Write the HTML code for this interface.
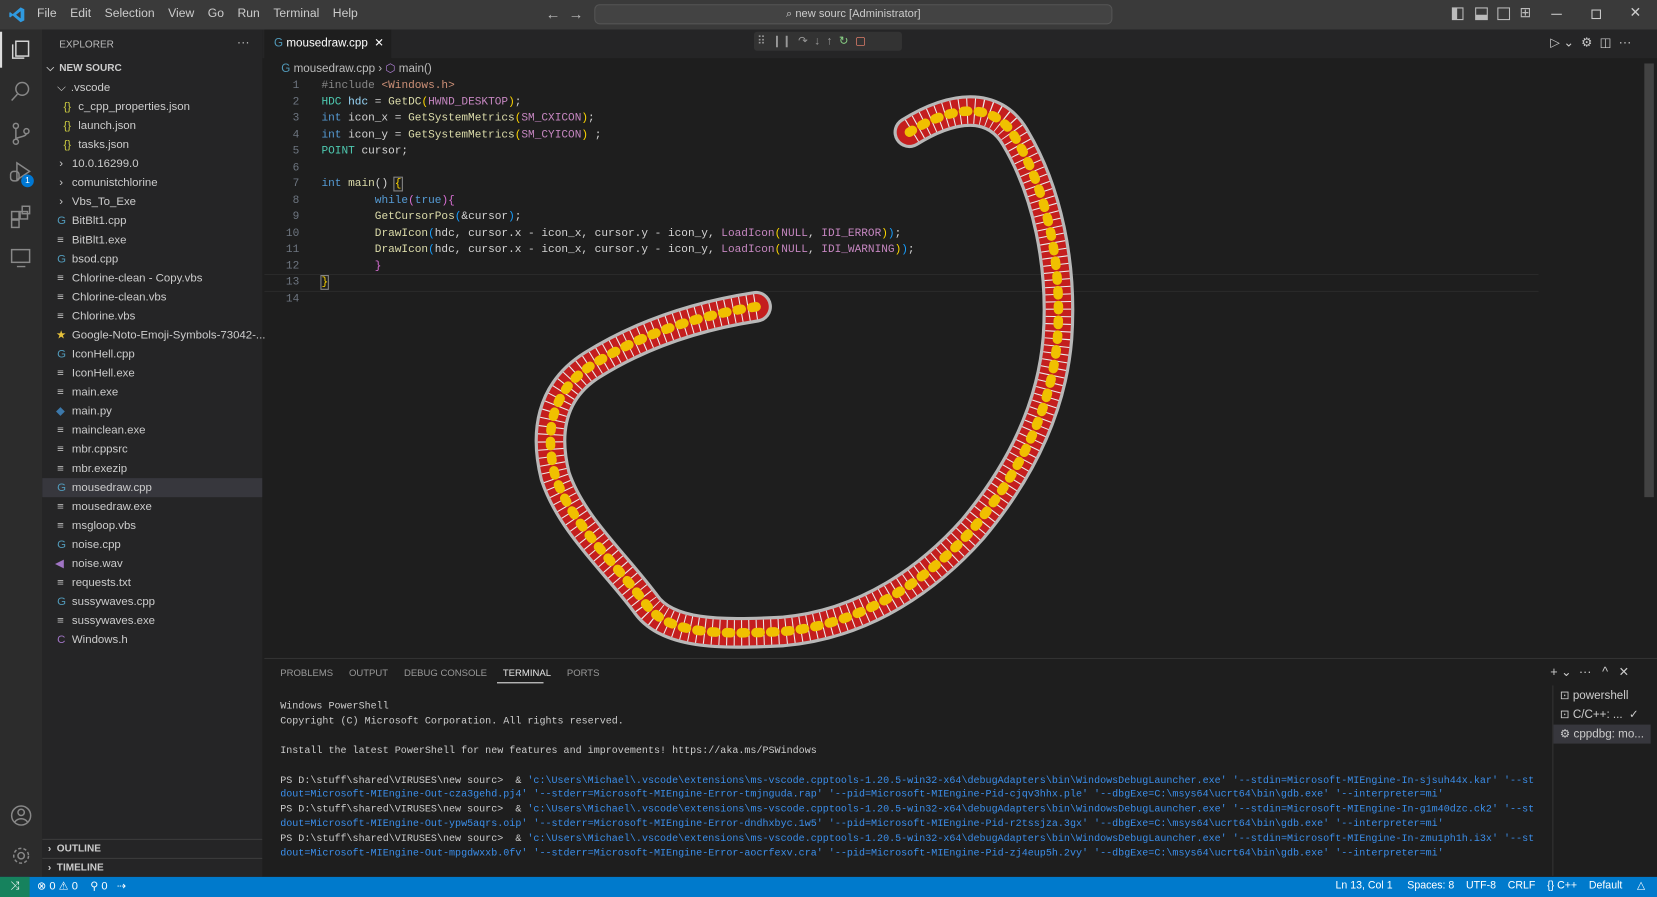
<!DOCTYPE html>
<html><head><meta charset="utf-8"><style>
*{margin:0;padding:0;box-sizing:border-box}
html,body{width:1657px;height:897px;overflow:hidden;background:#1e1e1e}
#w{position:absolute;left:0;top:0;width:1567px;height:848px;transform:scale(1.05744,1.05778);transform-origin:0 0;font-family:"Liberation Sans",sans-serif;color:#ccc;font-size:11px}
.a{position:absolute;white-space:pre}
.mono{font-family:"Liberation Mono",monospace}
#title{left:0;top:0;width:1567px;height:28px;background:#3a3a3a}
#act{left:0;top:28px;width:40px;height:801px;background:#2c2c2c}
#side{left:40px;top:28px;width:208px;height:801px;background:#252526}
#tabs{left:248px;top:28px;width:1319px;height:27px;background:#252526}
.it{position:absolute;left:0;width:208px;height:18px;line-height:18px;font-size:10.8px;color:#ccc}
.it i{position:absolute;font-style:normal}
.it b{position:absolute;font-weight:normal}
.code{font-size:10.5px;line-height:15.5px}
.ln{color:#6e7681;text-align:right;width:35px}
.t{font-size:9.5px;line-height:13.9px;color:#ccc}
.c{color:#3b8eea}
</style></head><body><div id="w">
<div id="title" class="a"></div>
<svg class="a" style="left:8px;top:6px" width="16" height="16" viewBox="0 0 16 16"><path d="M11.5 1 L15 2.7 V13.3 L11.5 15 L4 8.6 L1.6 10.5 L0.8 10 V6 L1.6 5.5 L4 7.4 Z M11.5 4.6 L7.2 8 L11.5 11.4 Z" fill="#2f9ae0"/></svg>
<div class="a" style="left:35px;top:7px;font-size:11.5px;color:#ccc">File&nbsp;&nbsp;&nbsp;&nbsp;Edit&nbsp;&nbsp;&nbsp;&nbsp;Selection&nbsp;&nbsp;&nbsp;&nbsp;View&nbsp;&nbsp;&nbsp;&nbsp;Go&nbsp;&nbsp;&nbsp;&nbsp;Run&nbsp;&nbsp;&nbsp;&nbsp;Terminal&nbsp;&nbsp;&nbsp;&nbsp;Help</div>
<div class="a" style="left:516px;top:5px;color:#bbb;font-size:14px">←&nbsp;&nbsp;→</div>
<div class="a" style="left:562px;top:4px;width:490px;height:19px;border:1px solid #555;border-radius:5px;background:#434343;text-align:center;line-height:17px;font-size:10.5px;color:#ccc">⌕ new sourc [Administrator]</div>
<div class="a" style="left:1373px;top:7px;width:11px;height:12px;border:1px solid #bbb;border-left:5px solid #bbb"></div>
<div class="a" style="left:1395px;top:7px;width:12px;height:12px;border:1px solid #bbb;border-bottom:5px solid #bbb"></div>
<div class="a" style="left:1416px;top:7px;width:12px;height:12px;border:1px solid #bbb"></div>
<div class="a" style="left:1437px;top:4px;color:#bbb;font-size:13px">⊞</div>
<div class="a" style="left:1467px;top:13px;width:10px;height:1px;background:#ccc"></div>
<div class="a" style="left:1505px;top:9px;width:9px;height:9px;border:1px solid #ccc"></div>
<div class="a" style="left:1541px;top:4px;color:#ccc;font-size:13px">✕</div>

<div id="act" class="a"></div>
<div class="a" style="left:0;top:30px;width:2px;height:34px;background:#ddd"></div>
<svg class="a" style="left:9px;top:34px" width="22" height="190" viewBox="0 0 22 190" fill="none" stroke="#d4d4d4" stroke-width="1.4">
<rect x="6" y="5" width="12" height="14"/><path d="M3 8v13h11"/>
<g stroke="#888"><circle cx="12" cy="50" r="6"/><path d="M7.5 55 L2 61"/>
<circle cx="6" cy="85" r="2.4"/><circle cx="6" cy="100" r="2.4"/><circle cx="16" cy="90" r="2.4"/><path d="M6 87v10M16 92c0 4-10 3-10 6"/>
<path d="M7 120 L19 128 L7 136 Z"/><rect x="1" y="128" width="8" height="9" rx="3"/>
<rect x="2" y="166" width="7" height="7"/><rect x="10" y="166" width="7" height="7"/><rect x="2" y="174" width="7" height="7"/><rect x="12" y="161" width="7" height="7"/></g></svg>
<div class="a" style="left:20px;top:165px;width:12px;height:12px;border-radius:6px;background:#0078d4;color:#fff;font-size:8px;text-align:center;line-height:12px">1</div>
<svg class="a" style="left:9px;top:234px" width="22" height="20" fill="none" stroke="#888" stroke-width="1.4"><rect x="2" y="2" width="17" height="12"/><path d="M7 18h8"/></svg>
<svg class="a" style="left:9px;top:760px" width="22" height="60" fill="none" stroke="#888" stroke-width="1.4"><circle cx="11" cy="11" r="9"/><circle cx="11" cy="8" r="3"/><path d="M5 17c3-4 9-4 12 0"/><circle cx="11" cy="49" r="3"/><circle cx="11" cy="49" r="7" stroke-dasharray="3 2"/></svg>

<div id="side" class="a"></div>
<div class="a" style="left:56px;top:37px;font-size:9.5px;color:#bbb">EXPLORER</div>
<div class="a" style="left:224px;top:33px;color:#bbb;font-size:12px">···</div>
<div class="a" style="left:40px;top:56px;width:208px">
<div class="it" style="top:0;font-weight:bold;font-size:9.5px"><i style="left:4px">⌵</i><b style="left:16px;font-weight:bold">NEW SOURC</b></div>
<div class="it" style="top:18px"><i style="left:14px">⌵</i><b style="left:27px">.vscode</b></div>
<div class="it" style="top:36px"><i style="left:20px;color:#cbcb41">{}</i><b style="left:34px">c_cpp_properties.json</b></div>
<div class="it" style="top:54px"><i style="left:20px;color:#cbcb41">{}</i><b style="left:34px">launch.json</b></div>
<div class="it" style="top:72px"><i style="left:20px;color:#cbcb41">{}</i><b style="left:34px">tasks.json</b></div>
<div class="it" style="top:90px"><i style="left:16px">›</i><b style="left:28px">10.0.16299.0</b></div>
<div class="it" style="top:108px"><i style="left:16px">›</i><b style="left:28px">comunistchlorine</b></div>
<div class="it" style="top:126px"><i style="left:16px">›</i><b style="left:28px">Vbs_To_Exe</b></div>
<div class="it" style="top:144px"><i style="left:14px;color:#519aba">G</i><b style="left:28px">BitBlt1.cpp</b></div>
<div class="it" style="top:162px"><i style="left:14px">≡</i><b style="left:28px">BitBlt1.exe</b></div>
<div class="it" style="top:180px"><i style="left:14px;color:#519aba">G</i><b style="left:28px">bsod.cpp</b></div>
<div class="it" style="top:198px"><i style="left:14px">≡</i><b style="left:28px">Chlorine-clean - Copy.vbs</b></div>
<div class="it" style="top:216px"><i style="left:14px">≡</i><b style="left:28px">Chlorine-clean.vbs</b></div>
<div class="it" style="top:234px"><i style="left:14px">≡</i><b style="left:28px">Chlorine.vbs</b></div>
<div class="it" style="top:252px"><i style="left:13px;color:#e8c33b">★</i><b style="left:28px">Google-Noto-Emoji-Symbols-73042-...</b></div>
<div class="it" style="top:270px"><i style="left:14px;color:#519aba">G</i><b style="left:28px">IconHell.cpp</b></div>
<div class="it" style="top:288px"><i style="left:14px">≡</i><b style="left:28px">IconHell.exe</b></div>
<div class="it" style="top:306px"><i style="left:14px">≡</i><b style="left:28px">main.exe</b></div>
<div class="it" style="top:324px"><i style="left:13px;color:#3c78aa">◆</i><b style="left:28px">main.py</b></div>
<div class="it" style="top:342px"><i style="left:14px">≡</i><b style="left:28px">mainclean.exe</b></div>
<div class="it" style="top:360px"><i style="left:14px">≡</i><b style="left:28px">mbr.cppsrc</b></div>
<div class="it" style="top:378px"><i style="left:14px">≡</i><b style="left:28px">mbr.exezip</b></div>
<div class="it" style="top:396px;background:#37373d"><i style="left:14px;color:#519aba">G</i><b style="left:28px">mousedraw.cpp</b></div>
<div class="it" style="top:414px"><i style="left:14px">≡</i><b style="left:28px">mousedraw.exe</b></div>
<div class="it" style="top:432px"><i style="left:14px">≡</i><b style="left:28px">msgloop.vbs</b></div>
<div class="it" style="top:450px"><i style="left:14px;color:#519aba">G</i><b style="left:28px">noise.cpp</b></div>
<div class="it" style="top:468px"><i style="left:12px;color:#a074c4">◀</i><b style="left:28px">noise.wav</b></div>
<div class="it" style="top:486px"><i style="left:14px">≡</i><b style="left:28px">requests.txt</b></div>
<div class="it" style="top:504px"><i style="left:14px;color:#519aba">G</i><b style="left:28px">sussywaves.cpp</b></div>
<div class="it" style="top:522px"><i style="left:14px">≡</i><b style="left:28px">sussywaves.exe</b></div>
<div class="it" style="top:540px"><i style="left:14px;color:#a074c4">C</i><b style="left:28px">Windows.h</b></div>
<div class="it" style="top:737px;border-top:1px solid #3c3c3c;font-weight:bold;font-size:9.5px">&nbsp;&nbsp;›&nbsp;&nbsp;OUTLINE</div>
<div class="it" style="top:755px;border-top:1px solid #3c3c3c;font-weight:bold;font-size:9.5px">&nbsp;&nbsp;›&nbsp;&nbsp;TIMELINE</div>
</div>

<div id="tabs" class="a"></div>
<div class="a" style="left:250px;top:28px;width:120px;height:27px;background:#1e1e1e;line-height:27px;font-size:11px;color:#fff">&nbsp;&nbsp;&nbsp;<span style="color:#519aba">G</span> mousedraw.cpp&nbsp;&nbsp;✕</div>
<div class="a" style="left:713px;top:30px;width:140px;height:18px;background:#333;border-radius:3px;color:#999;font-size:11px;line-height:18px">&nbsp;⠿&nbsp;&nbsp;❙❙&nbsp;&nbsp;↷&nbsp;&nbsp;↓&nbsp;&nbsp;↑&nbsp;&nbsp;<span style="color:#89d185">↻</span>&nbsp;&nbsp;<span style="color:#f48771">▢</span></div>
<div class="a" style="left:1466px;top:33px;color:#ccc;font-size:12px">▷ ⌄&nbsp;&nbsp;⚙&nbsp;&nbsp;◫&nbsp;&nbsp;···</div>
<div class="a" style="left:266px;top:58px;font-size:11px;color:#bbb"><span style="color:#519aba">G</span> mousedraw.cpp › <span style="color:#b180d7">⬡</span> main()</div>

<div class="a mono code ln" style="left:248px;top:74px">1
2
3
4
5
6
7
8
9
10
11
12
13
14</div>
<div class="a mono code" style="left:304px;top:74px;color:#d4d4d4"><span style="color:#888">#include</span> <span style="color:#ce9178">&lt;Windows.h&gt;</span>
<span style="color:#4ec9b0">HDC</span> <span style="color:#9cdcfe">hdc</span> = <span style="color:#dcdcaa">GetDC</span><span style="color:#ffd700">(</span><span style="color:#c586c0">HWND_DESKTOP</span><span style="color:#ffd700">)</span>;
<span style="color:#569cd6">int</span> icon_x = <span style="color:#dcdcaa">GetSystemMetrics</span><span style="color:#ffd700">(</span><span style="color:#c586c0">SM_CXICON</span><span style="color:#ffd700">)</span>;
<span style="color:#569cd6">int</span> icon_y = <span style="color:#dcdcaa">GetSystemMetrics</span><span style="color:#ffd700">(</span><span style="color:#c586c0">SM_CYICON</span><span style="color:#ffd700">)</span> ;
<span style="color:#4ec9b0">POINT</span> cursor;

<span style="color:#569cd6">int</span> <span style="color:#dcdcaa">main</span>() <span style="color:#ffd700;outline:1px solid #888">{</span>
        <span style="color:#569cd6">while</span><span style="color:#da70d6">(</span><span style="color:#569cd6">true</span><span style="color:#da70d6">){</span>
        <span style="color:#dcdcaa">GetCursorPos</span><span style="color:#179fff">(</span>&amp;cursor<span style="color:#179fff">)</span>;
        <span style="color:#dcdcaa">DrawIcon</span><span style="color:#179fff">(</span>hdc, cursor.x - icon_x, cursor.y - icon_y, <span style="color:#c586c0">LoadIcon</span><span style="color:#ffd700">(</span><span style="color:#c586c0">NULL</span>, <span style="color:#c586c0">IDI_ERROR</span><span style="color:#ffd700">)</span><span style="color:#179fff">)</span>;
        <span style="color:#dcdcaa">DrawIcon</span><span style="color:#179fff">(</span>hdc, cursor.x - icon_x, cursor.y - icon_y, <span style="color:#c586c0">LoadIcon</span><span style="color:#ffd700">(</span><span style="color:#c586c0">NULL</span>, <span style="color:#c586c0">IDI_WARNING</span><span style="color:#ffd700">)</span><span style="color:#179fff">)</span>;
        <span style="color:#da70d6">}</span>
<span style="color:#ffd700;outline:1px solid #888">}</span>
</div>
<div class="a" style="left:250px;top:259px;width:1205px;height:17px;border-top:1px solid #2a2a2a;border-bottom:1px solid #2a2a2a"></div>
<div class="a" style="left:1555px;top:60px;width:9px;height:410px;background:#424242"></div>

<svg class="a" style="left:0;top:0" width="1567" height="848" fill="none" stroke-linecap="round" stroke-linejoin="round">
<path id="s" d="M715 290 C650 300 600 320 560 345 C520 370 515 410 525 450 C540 495 580 530 610 570 C630 600 680 600 740 597 C820 590 880 545 920 500 C970 440 995 380 1000 320 C1005 250 990 180 960 130 C940 95 900 100 860 125"/>
<use href="#s" stroke="#b8b8b8" stroke-width="30"/>
<use href="#s" stroke="#c41e1e" stroke-width="24"/>
<use href="#s" stroke="#ececec" stroke-width="24" stroke-dasharray="1 6" stroke-linecap="butt"/>
<use href="#s" stroke="#f0c000" stroke-width="9" stroke-dasharray="4 10"/>
</svg>

<div class="a" style="left:250px;top:622px;width:1317px;height:1px;background:#333"></div>
<div class="a" style="left:265px;top:631px;font-size:9px;color:#999">PROBLEMS&nbsp;&nbsp;&nbsp;&nbsp;&nbsp;&nbsp;OUTPUT&nbsp;&nbsp;&nbsp;&nbsp;&nbsp;&nbsp;DEBUG CONSOLE&nbsp;&nbsp;&nbsp;&nbsp;&nbsp;&nbsp;<span style="color:#e7e7e7">TERMINAL</span>&nbsp;&nbsp;&nbsp;&nbsp;&nbsp;&nbsp;PORTS</div>
<div class="a" style="left:470px;top:645px;width:44px;height:1px;background:#e7e7e7"></div>
<div class="a" style="left:1466px;top:628px;font-size:12px;color:#ccc">+ ⌄&nbsp;&nbsp;···&nbsp;&nbsp;&nbsp;^&nbsp;&nbsp;&nbsp;✕</div>
<div class="a" style="left:1468px;top:648px;width:1px;height:180px;background:#333"></div>
<div class="a" style="left:1469px;top:649px;font-size:11px;line-height:18px;color:#ccc">&nbsp;&nbsp;⊡ powershell
&nbsp;&nbsp;⊡ C/C++: ...&nbsp;&nbsp;✓</div>
<div class="a" style="left:1469px;top:685px;width:92px;height:18px;background:#37373d;font-size:11px;line-height:18px;color:#ccc">&nbsp;&nbsp;⚙ cppdbg: mo...</div>
<div class="a mono t" style="left:265px;top:661px">Windows PowerShell
Copyright (C) Microsoft Corporation. All rights reserved.

Install the latest PowerShell for new features and improvements! https://aka.ms/PSWindows

PS D:\stuff\shared\VIRUSES\new sourc&gt;  &amp; <span class="c">'c:\Users\Michael\.vscode\extensions\ms-vscode.cpptools-1.20.5-win32-x64\debugAdapters\bin\WindowsDebugLauncher.exe' '--stdin=Microsoft-MIEngine-In-sjsuh44x.kar' '--st</span>
<span class="c">dout=Microsoft-MIEngine-Out-cza3gehd.pj4' '--stderr=Microsoft-MIEngine-Error-tmjnguda.rap' '--pid=Microsoft-MIEngine-Pid-cjqv3hhx.ple' '--dbgExe=C:\msys64\ucrt64\bin\gdb.exe' '--interpreter=mi'</span>
PS D:\stuff\shared\VIRUSES\new sourc&gt;  &amp; <span class="c">'c:\Users\Michael\.vscode\extensions\ms-vscode.cpptools-1.20.5-win32-x64\debugAdapters\bin\WindowsDebugLauncher.exe' '--stdin=Microsoft-MIEngine-In-g1m40dzc.ck2' '--st</span>
<span class="c">dout=Microsoft-MIEngine-Out-ypw5aqrs.oip' '--stderr=Microsoft-MIEngine-Error-dndhxbyc.1w5' '--pid=Microsoft-MIEngine-Pid-r2tssjza.3gx' '--dbgExe=C:\msys64\ucrt64\bin\gdb.exe' '--interpreter=mi'</span>
PS D:\stuff\shared\VIRUSES\new sourc&gt;  &amp; <span class="c">'c:\Users\Michael\.vscode\extensions\ms-vscode.cpptools-1.20.5-win32-x64\debugAdapters\bin\WindowsDebugLauncher.exe' '--stdin=Microsoft-MIEngine-In-zmu1ph1h.i3x' '--st</span>
<span class="c">dout=Microsoft-MIEngine-Out-mpgdwxxb.0fv' '--stderr=Microsoft-MIEngine-Error-aocrfexv.cra' '--pid=Microsoft-MIEngine-Pid-zj4eup5h.2vy' '--dbgExe=C:\msys64\ucrt64\bin\gdb.exe' '--interpreter=mi'</span></div>

<div class="a" style="left:0;top:829px;width:1567px;height:19px;background:#007acc"></div>
<div class="a" style="left:0;top:829px;width:28px;height:19px;background:#16825d;color:#fff;text-align:center;font-size:11px;line-height:19px">⤨</div>
<div class="a" style="left:35px;top:832px;color:#fff;font-size:10.5px">⊗ 0 ⚠ 0&nbsp;&nbsp;&nbsp;&nbsp;⚲ 0&nbsp;&nbsp;&nbsp;⇢</div>
<div class="a" style="left:1263px;top:832px;color:#fff;font-size:10px">Ln 13, Col 1&nbsp;&nbsp;&nbsp;&nbsp;&nbsp;Spaces: 8&nbsp;&nbsp;&nbsp;&nbsp;UTF-8&nbsp;&nbsp;&nbsp;&nbsp;CRLF&nbsp;&nbsp;&nbsp;&nbsp;{} C++&nbsp;&nbsp;&nbsp;&nbsp;Default&nbsp;&nbsp;&nbsp;&nbsp;&nbsp;△</div>
</div></body></html>
